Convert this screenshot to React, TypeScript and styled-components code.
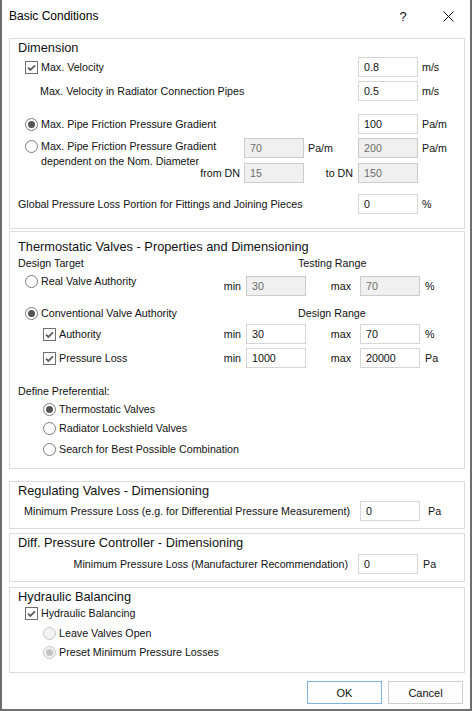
import React from 'react';
import styled, { createGlobalStyle } from 'styled-components';

const GlobalStyle = createGlobalStyle`
  html, body {
    margin: 0;
    padding: 0;
    background: #fff;
  }
  body {
    font-family: "Liberation Sans", Arial, sans-serif;
  }
`;

// ---------- small drawn controls ----------

const CheckMark: React.FC = () => (
  <svg width="13" height="13" viewBox="0 0 13 13" style={{ display: 'block', flexShrink: 0 }}>
    <rect x="0.5" y="0.5" width="12" height="12" fill="#fff" stroke="#6f6f6f" />
    <path d="M3 6.6l2.3 2.3L10 4.3" fill="none" stroke="#5c5c5c" strokeWidth="1.8" />
  </svg>
);

const RadioMark: React.FC<{ on?: boolean; disabled?: boolean }> = ({ on, disabled }) => (
  <svg width="13" height="13" viewBox="0 0 13 13" style={{ display: 'block', flexShrink: 0 }}>
    <circle
      cx="6.5"
      cy="6.5"
      r="6"
      fill={disabled ? '#f3f3f3' : '#fff'}
      stroke={disabled ? '#c6c6c6' : '#7a7a7a'}
    />
    {on && <circle cx="6.5" cy="6.5" r="3.5" fill={disabled ? '#c4c4c4' : '#555'} />}
  </svg>
);

const Choice: React.FC<{
  kind: 'check' | 'radio';
  on?: boolean;
  disabled?: boolean;
  indent?: number;
  children: React.ReactNode;
}> = ({ kind, on, disabled, indent = 0, children }) => (
  <ChoiceBox $indent={indent}>
    {kind === 'check' ? <CheckMark /> : <RadioMark on={on} disabled={disabled} />}
    <ChoiceLabel>{children}</ChoiceLabel>
  </ChoiceBox>
);

// ---------- page ----------

export default function App() {
  return (
    <>
      <GlobalStyle />
      <Window>
        <TitleBar>
          <Caption>Basic Conditions</Caption>
          <HelpButton>?</HelpButton>
          <CloseButton>
            <svg width="11" height="11" viewBox="0 0 11 11">
              <path d="M0.5 0.5l10 10M10.5 0.5l-10 10" stroke="#111" strokeWidth="1" />
            </svg>
          </CloseButton>
        </TitleBar>

        <Body>
          {/* Dimension */}
          <Group $height={191}>
            <GroupTitle>Dimension</GroupTitle>
            <FieldGrid $unit={46} $top={0}>
              <Cell $col="1">
                <Choice kind="check" indent={15}>Max. Velocity</Choice>
              </Cell>
              <Input $col="5" readOnly value="0.8" />
              <Cell $col="6" $pl={4}>m/s</Cell>
            </FieldGrid>
            <FieldGrid $unit={46} $top={4}>
              <Cell $col="1" $pl={30}>Max. Velocity in Radiator Connection Pipes</Cell>
              <Input $col="5" readOnly value="0.5" />
              <Cell $col="6" $pl={4}>m/s</Cell>
            </FieldGrid>
            <FieldGrid $unit={46} $top={13}>
              <Cell $col="1">
                <Choice kind="radio" on indent={15}>Max. Pipe Friction Pressure Gradient</Choice>
              </Cell>
              <Input $col="5" readOnly value="100" />
              <Cell $col="6" $pl={4}>Pa/m</Cell>
            </FieldGrid>
            <FieldGrid $unit={46} $top={4} $rows={2}>
              <Cell $col="1" $row="1 / 3" $start $mt={1}>
                <Choice kind="radio" indent={15}>
                  Max. Pipe Friction Pressure Gradient
                  <br />
                  dependent on the Nom. Diameter
                </Choice>
              </Cell>
              <Input $col="3" $row="1" readOnly disabled value="70" />
              <Cell $col="4" $row="1" $pl={4}>Pa/m</Cell>
              <Input $col="5" $row="1" readOnly disabled value="200" />
              <Cell $col="6" $row="1" $pl={4}>Pa/m</Cell>
              <Cell $col="2" $row="2" $end $pr={4}>from DN</Cell>
              <Input $col="3" $row="2" readOnly disabled value="15" />
              <Cell $col="4" $row="2" $end $pr={5}>to DN</Cell>
              <Input $col="5" $row="2" readOnly disabled value="150" />
            </FieldGrid>
            <FieldGrid $unit={46} $top={11}>
              <Cell $col="1" $pl={8}>Global Pressure Loss Portion for Fittings and Joining Pieces</Cell>
              <Input $col="5" readOnly value="0" />
              <Cell $col="6" $pl={4}>%</Cell>
            </FieldGrid>
          </Group>

          {/* Thermostatic valves */}
          <Group $height={238} $top={2}>
            <GroupTitle $top={6}>Thermostatic Valves - Properties and Dimensioning</GroupTitle>
            <Line $top={0}>
              <Cell $pl={8}>Design Target</Cell>
              <Cell>Testing Range</Cell>
            </Line>
            <FieldGrid $unit={44} $top={6}>
              <Cell $col="1" $start $mt={-2}>
                <Choice kind="radio" indent={15}>Real Valve Authority</Choice>
              </Cell>
              <Cell $col="2" $pr={5}>min</Cell>
              <Input $col="3" readOnly disabled value="30" />
              <Cell $col="4" $end $pr={9}>max</Cell>
              <Input $col="5" readOnly disabled value="70" />
              <Cell $col="6" $pl={5}>%</Cell>
            </FieldGrid>
            <Line $top={10}>
              <Cell>
                <Choice kind="radio" on indent={15}>Conventional Valve Authority</Choice>
              </Cell>
              <Cell>Design Range</Cell>
            </Line>
            <FieldGrid $unit={44} $top={4}>
              <Cell $col="1">
                <Choice kind="check" indent={33}>Authority</Choice>
              </Cell>
              <Cell $col="2" $pr={5}>min</Cell>
              <Input $col="3" readOnly value="30" />
              <Cell $col="4" $end $pr={9}>max</Cell>
              <Input $col="5" readOnly value="70" />
              <Cell $col="6" $pl={5}>%</Cell>
            </FieldGrid>
            <FieldGrid $unit={44} $top={4}>
              <Cell $col="1">
                <Choice kind="check" indent={33}>Pressure Loss</Choice>
              </Cell>
              <Cell $col="2" $pr={5}>min</Cell>
              <Input $col="3" readOnly value="1000" />
              <Cell $col="4" $end $pr={9}>max</Cell>
              <Input $col="5" readOnly value="20000" />
              <Cell $col="6" $pl={5}>Pa</Cell>
            </FieldGrid>
            <Line $top={16}>
              <Cell $pl={8}>Define Preferential:</Cell>
            </Line>
            <Line $top={4}>
              <Cell>
                <Choice kind="radio" on indent={33}>Thermostatic Valves</Choice>
              </Cell>
            </Line>
            <Line $top={5}>
              <Cell>
                <Choice kind="radio" indent={33}>Radiator Lockshield Valves</Choice>
              </Cell>
            </Line>
            <Line $top={7}>
              <Cell>
                <Choice kind="radio" indent={33}>Search for Best Possible Combination</Choice>
              </Cell>
            </Line>
          </Group>

          {/* Regulating valves */}
          <Group $height={48} $top={12}>
            <GroupTitle>Regulating Valves - Dimensioning</GroupTitle>
            <FieldGrid $unit={44} $top={1}>
              <Cell $col="1 / 5" $end $pr={10}>
                Minimum Pressure Loss (e.g. for Differential Pressure Measurement)
              </Cell>
              <Input $col="5" readOnly value="0" />
              <Cell $col="6" $pl={8}>Pa</Cell>
            </FieldGrid>
          </Group>

          {/* Differential pressure controller */}
          <Group $height={49} $top={4}>
            <GroupTitle>Diff. Pressure Controller - Dimensioning</GroupTitle>
            <FieldGrid $unit={46} $top={2}>
              <Cell $col="1 / 5" $end $pr={10}>
                Minimum Pressure Loss (Manufacturer Recommendation)
              </Cell>
              <Input $col="5" readOnly value="0" />
              <Cell $col="6" $pl={5}>Pa</Cell>
            </FieldGrid>
          </Group>

          {/* Hydraulic balancing */}
          <Group $height={86} $top={5}>
            <GroupTitle>Hydraulic Balancing</GroupTitle>
            <Line $top={0}>
              <Cell>
                <Choice kind="check" indent={15}>Hydraulic Balancing</Choice>
              </Cell>
            </Line>
            <Line $top={6}>
              <Cell>
                <Choice kind="radio" disabled indent={33}>Leave Valves Open</Choice>
              </Cell>
            </Line>
            <Line $top={5}>
              <Cell>
                <Choice kind="radio" on disabled indent={33}>Preset Minimum Pressure Losses</Choice>
              </Cell>
            </Line>
          </Group>

          <ButtonBar>
            <DialogButton $primary>OK</DialogButton>
            <DialogButton>Cancel</DialogButton>
          </ButtonBar>
        </Body>
      </Window>
    </>
  );
}

// ---------- styles ----------

const Window = styled.div`
  width: 472px;
  height: 711px;
  box-sizing: border-box;
  border: 2px solid #6e6e6e;
  border-top: none;
  background: #fff;
  color: #111;
  font-size: 10.7px;
  display: flex;
  flex-direction: column;
`;

const TitleBar = styled.div`
  height: 32px;
  display: flex;
  align-items: center;
  padding-left: 7px;
`;

const Caption = styled.div`
  font-size: 12px;
  color: #000;
  flex: 1;
`;

const HelpButton = styled.div`
  width: 46px;
  text-align: center;
  font-size: 13px;
`;

const CloseButton = styled.div`
  width: 44px;
  display: flex;
  justify-content: center;
`;

const Body = styled.div`
  display: flex;
  flex-direction: column;
  padding: 6px 5px 0 7px;
`;

const Group = styled.div<{ $height: number; $top?: number }>`
  box-sizing: border-box;
  height: ${({ $height }) => $height}px;
  margin-top: ${({ $top = 0 }) => $top}px;
  border: 1px solid #dcdcdc;
  display: flex;
  flex-direction: column;
`;

const GroupTitle = styled.div<{ $top?: number }>`
  height: 18px;
  line-height: 18px;
  margin-top: ${({ $top = 0 }) => $top}px;
  padding-left: 8px;
  font-size: 12.8px;
  white-space: nowrap;
`;

const FieldGrid = styled.div<{ $unit: number; $top: number; $rows?: number }>`
  display: grid;
  grid-template-columns: minmax(0, 1fr) auto 60px 54px 60px ${({ $unit }) => $unit}px;
  grid-template-rows: repeat(${({ $rows = 1 }) => $rows}, 20px);
  row-gap: 5px;
  margin-top: ${({ $top }) => $top}px;
  align-items: center;
`;

const Line = styled.div<{ $top: number }>`
  display: grid;
  grid-template-columns: 288px 1fr;
  height: 14px;
  margin-top: ${({ $top }) => $top}px;
  align-items: center;
`;

const Cell = styled.div<{
  $col?: string;
  $row?: string;
  $end?: boolean;
  $start?: boolean;
  $pl?: number;
  $pr?: number;
  $mt?: number;
}>`
  grid-column: ${({ $col = 'auto' }) => $col};
  grid-row: ${({ $row = 'auto' }) => $row};
  align-self: ${({ $start }) => ($start ? 'start' : 'center')};
  margin-top: ${({ $mt = 0 }) => $mt}px;
  display: flex;
  align-items: center;
  justify-content: ${({ $end }) => ($end ? 'flex-end' : 'flex-start')};
  padding-left: ${({ $pl = 0 }) => $pl}px;
  padding-right: ${({ $pr = 0 }) => $pr}px;
  white-space: nowrap;
  line-height: 13px;
`;

const ChoiceBox = styled.div<{ $indent: number }>`
  display: flex;
  align-items: flex-start;
  gap: 3px;
  padding-left: ${({ $indent }) => $indent}px;
  white-space: nowrap;
  & > svg {
    margin-top: 1px;
  }
`;

const ChoiceLabel = styled.span`
  line-height: 15px;
`;

const Input = styled.input<{ $col: string; $row?: string }>`
  grid-column: ${({ $col }) => $col};
  grid-row: ${({ $row = 'auto' }) => $row};
  box-sizing: border-box;
  width: 60px;
  height: 20px;
  margin: 0;
  padding: 0 5px;
  border: 1px solid #d6d6d6;
  background: #fff;
  color: #111;
  font-family: "Liberation Sans", Arial, sans-serif;
  font-size: 10.7px;
  outline: none;

  &:disabled {
    background: #f0f0f0;
    border-color: #cccccc;
    color: #6d6d6d;
  }
`;

const ButtonBar = styled.div`
  display: flex;
  justify-content: flex-end;
  gap: 6px;
  margin-top: 8px;
  padding-right: 2px;
`;

const DialogButton = styled.button<{ $primary?: boolean }>`
  box-sizing: border-box;
  width: 75px;
  height: 23px;
  margin: 0;
  padding: 0;
  border: 1px solid ${({ $primary }) => ($primary ? '#7eb4e2' : '#cccccc')};
  background: #fdfdfd;
  color: #111;
  font-family: "Liberation Sans", Arial, sans-serif;
  font-size: 11px;
`;
